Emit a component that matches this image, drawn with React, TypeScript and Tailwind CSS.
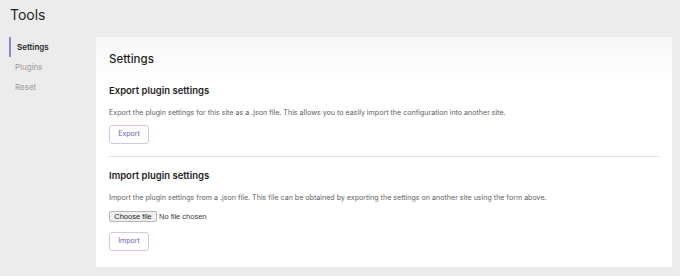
import React from "react";

export default function App() {
  const font = { fontFamily: "Inter, 'Liberation Sans', Arial, sans-serif" };
  return (
    <div className="w-[680px] h-[276px] bg-[#ececec] text-[#1e1e1e] overflow-hidden" style={font}>
      <div className="pl-[10px] pt-[8px] h-[37px] text-[14px] leading-[14px] text-[#1e1e1e]">Tools</div>
      <div className="flex">
        <div className="w-[96px] shrink-0 flex flex-col">
          <div className="ml-[9px] h-[20px] flex items-center border-l-2 border-[#8e80d6] pl-[6px] text-[8px] font-semibold text-[#1e1e1e]">
            Settings
          </div>
          <div className="ml-[9px] h-[20px] flex items-center pl-[6px] text-[8px] text-[#9a9a9a]">Plugins</div>
          <div className="ml-[9px] h-[20px] flex items-center pl-[6px] text-[8px] text-[#9a9a9a]">Reset</div>
        </div>
        <div className="w-[576px] h-[230px] bg-white flex flex-col">
          <div className="h-[44px] bg-gradient-to-b from-[#f7f7f7] to-white px-[13px] pt-[15px]">
            <div className="text-[11.5px] leading-[14px] font-medium text-[#1e1e1e]">Settings</div>
          </div>
          <div className="px-[13px]">
            <div className="text-[9.5px] leading-[12px] font-semibold text-[#1e1e1e] mt-[4px]">Export plugin settings</div>
            <div className="text-[7.1px] leading-[10px] text-[#606060] mt-[11px]">
              Export the plugin settings for this site as a .json file. This allows you to easily import the configuration into another site.
            </div>
            <button className="mt-[7px] h-[19px] w-[40px] rounded-[3px] border border-[#cfc7f0] bg-white text-[7px] text-[#6a5acd] flex items-center justify-center">
              Export
            </button>
            <div className="mt-[12px] h-px bg-[#e6e6e6]" />
            <div className="text-[9.5px] leading-[12px] font-semibold text-[#1e1e1e] mt-[13px]">Import plugin settings</div>
            <div className="text-[7.1px] leading-[10px] text-[#606060] mt-[11px]">
              Import the plugin settings from a .json file. This file can be obtained by exporting the settings on another site using the form above.
            </div>
            <div className="mt-[8px] flex items-center h-[11px]">
              <span className="h-[11px] w-[48px] rounded-[2px] border border-[#b5b5b5] bg-[#efefef] text-[7.5px] leading-[9px] text-[#1e1e1e] flex items-center justify-center" style={{ fontFamily: "'Liberation Sans', Arial, sans-serif" }}>
                Choose file
              </span>
              <span className="ml-[2px] text-[7.5px] text-[#3c3c3c]" style={{ fontFamily: "'Liberation Sans', Arial, sans-serif" }}>No file chosen</span>
            </div>
            <button className="mt-[10px] h-[19px] w-[40px] rounded-[3px] border border-[#cfc7f0] bg-white text-[7px] text-[#6a5acd] flex items-center justify-center">
              Import
            </button>
          </div>
        </div>
      </div>
    </div>
  );
}
